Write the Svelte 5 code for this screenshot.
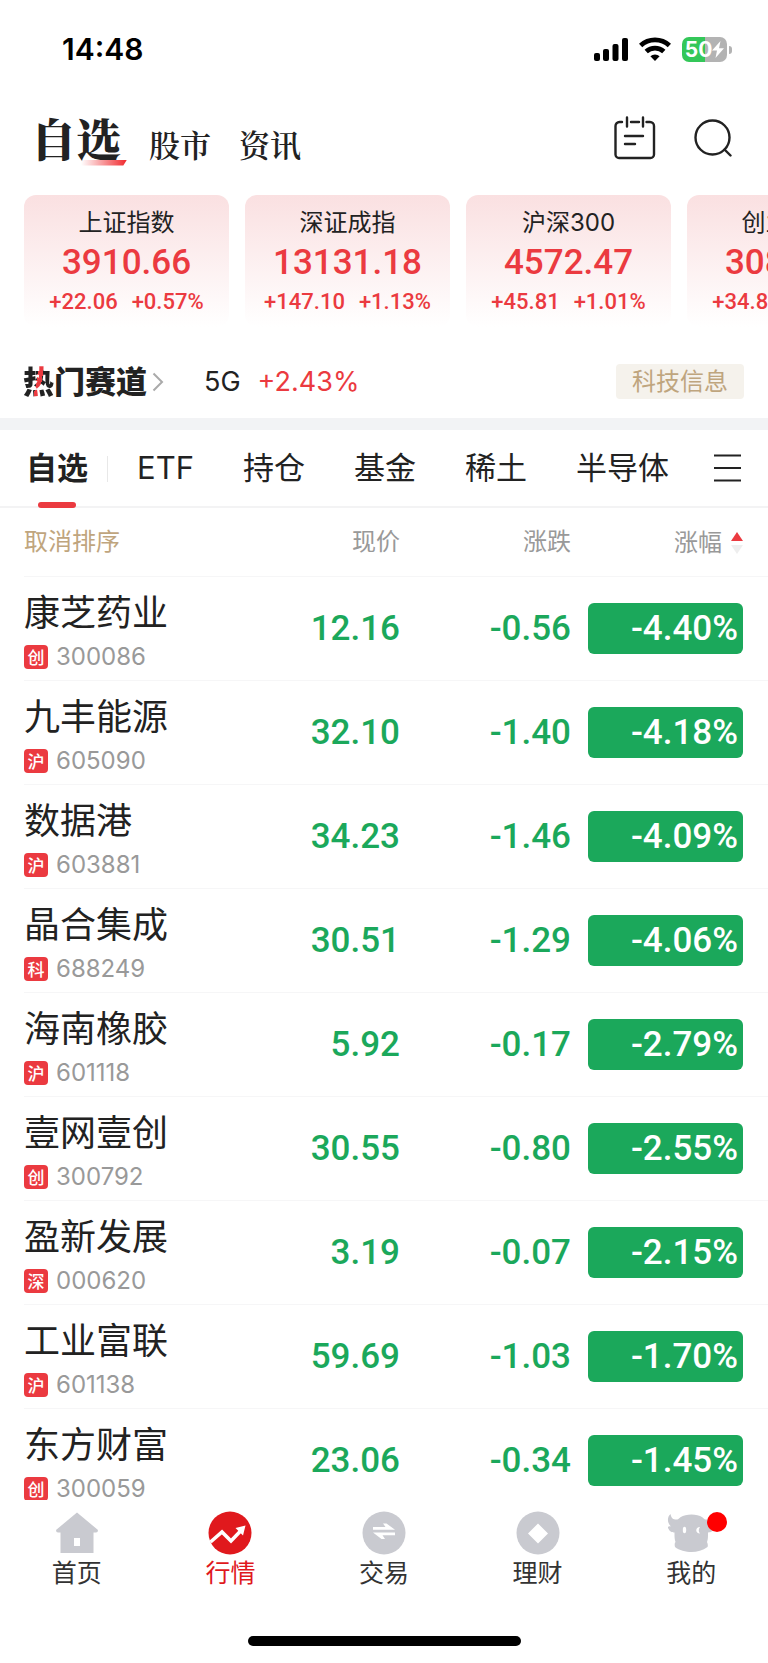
<script lang="ts">
	type Stock = { name: string; market: string; code: string; price: string; change: string; percent: string };

	const indices = [
		{ name: '上证指数', value: '3910.66', change: '+22.06', percent: '+0.57%' },
		{ name: '深证成指', value: '13131.18', change: '+147.10', percent: '+1.13%' },
		{ name: '沪深300', value: '4572.47', change: '+45.81', percent: '+1.01%' },
		{ name: '创业板指', value: '3083.72', change: '+34.83', percent: '+1.14%' }
	];

	const groups = ['自选', 'ETF', '持仓', '基金', '稀土', '半导体'];

	const stocks: Stock[] = [
		{ name: '康芝药业', market: '创', code: '300086', price: '12.16', change: '-0.56', percent: '-4.40%' },
		{ name: '九丰能源', market: '沪', code: '605090', price: '32.10', change: '-1.40', percent: '-4.18%' },
		{ name: '数据港', market: '沪', code: '603881', price: '34.23', change: '-1.46', percent: '-4.09%' },
		{ name: '晶合集成', market: '科', code: '688249', price: '30.51', change: '-1.29', percent: '-4.06%' },
		{ name: '海南橡胶', market: '沪', code: '601118', price: '5.92', change: '-0.17', percent: '-2.79%' },
		{ name: '壹网壹创', market: '创', code: '300792', price: '30.55', change: '-0.80', percent: '-2.55%' },
		{ name: '盈新发展', market: '深', code: '000620', price: '3.19', change: '-0.07', percent: '-2.15%' },
		{ name: '工业富联', market: '沪', code: '601138', price: '59.69', change: '-1.03', percent: '-1.70%' },
		{ name: '东方财富', market: '创', code: '300059', price: '23.06', change: '-0.34', percent: '-1.45%' }
	];

	let activeGroup = $state('自选');
</script>

<div class="app">
	<div class="status">
		<span class="time">14:48</span>
		<div class="status-icons">
			<svg width="34" height="23" viewBox="0 0 34 23" aria-hidden="true">
				<rect x="0" y="15" width="6" height="8" rx="2" />
				<rect x="9" y="11" width="6" height="12" rx="2" />
				<rect x="18.500" y="6" width="6" height="17" rx="2" />
				<rect x="28" y="0" width="6" height="23" rx="2" />
			</svg>
			<svg width="32" height="24" viewBox="0 0 32 24" fill="none" stroke="#000" stroke-width="4.800" aria-hidden="true">
				<path d="M1.600 8.500A21 21 0 0 1 30.400 8.500" />
				<path d="M7.200 14.600A13 13 0 0 1 24.800 14.600" />
				<path d="M16 24l-4.600-4.700a6.800 6.800 0 0 1 9.200 0z" fill="#000" stroke="none" />
			</svg>
			<div class="battery">
				<span>50</span>
				<svg width="12" height="17" viewBox="0 0 12 17" fill="#fff" aria-hidden="true">
					<path d="M8.500 0L0 9.500h5L3.500 17 12 7.200H7z" />
				</svg>
			</div>
		</div>
	</div>

	<header class="top">
		<nav class="sections">
			<a class="current" href="#watch">自选</a>
			<a href="#market">股市</a>
			<a href="#news">资讯</a>
		</nav>
		<button class="icon" aria-label="日历">
			<svg width="42" height="44" viewBox="0 0 42 44" fill="none" stroke="#222" stroke-width="2.400" stroke-linecap="round">
				<path d="M8 6H5.500a4 4 0 0 0-4 4v28.500a3.500 3.500 0 0 0 3.500 3.500h31.500a3.500 3.500 0 0 0 3.500-3.500V10a4 4 0 0 0-4-4H32.500M17 6h8" />
				<path d="M13 1.500v9M29 1.500v9" />
				<path d="M11 20h18M11 28h10" />
			</svg>
		</button>
		<button class="icon" aria-label="搜索">
			<svg width="38" height="38" viewBox="0 0 38 38" fill="none" stroke="#222" stroke-width="2.400" stroke-linecap="round">
				<circle cx="18.500" cy="18.500" r="17" />
				<path d="M30.500 30.500l6 6" />
			</svg>
		</button>
	</header>

	<section class="indices">
		{#each indices as item}
			<a class="card" href="#index">
				<span class="card-name">{item.name}</span>
				<span class="card-value">{item.value}</span>
				<span class="card-change"><span>{item.change}</span><span>{item.percent}</span></span>
			</a>
		{/each}
	</section>

	<section class="hot">
		<h2><span class="flame">热</span>门赛道</h2>
		<svg width="12" height="20" viewBox="0 0 12 20" fill="none" stroke="#aaa" stroke-width="2" aria-hidden="true">
			<path d="M1.500 1.500l8.500 8.500-8.500 8.500" />
		</svg>
		<span class="track">5G</span>
		<span class="track-change">+2.43%</span>
		<a class="tag" href="#tech">科技信息</a>
	</section>

	<nav class="groups">
		{#each groups as group}
			<button class:active={group === activeGroup} onclick={() => (activeGroup = group)}>{group}</button>
		{/each}
		<button class="menu" aria-label="全部分组">
			<svg width="27" height="28" viewBox="0 0 27 28" stroke="#222" stroke-width="2">
				<path d="M0 1.500h27M0 14h27M0 26.500h27" />
			</svg>
		</button>
	</nav>

	<main class="list">
		<table>
			<thead>
				<tr>
					<th class="name"><button class="reset">取消排序</button></th>
					<th class="price">现价</th>
					<th class="change">涨跌</th>
					<th class="percent">
						<button class="sort">
							涨幅
							<svg width="12" height="22" viewBox="0 0 12 22" aria-hidden="true">
								<path d="M6 0l6 9H0z" fill="#eb3a40" />
								<path d="M6 22l6-9H0z" fill="#eee" />
							</svg>
						</button>
					</th>
				</tr>
			</thead>
			<tbody>
				{#each stocks as stock}
					<tr>
						<td class="name">
							<div class="stock-name">{stock.name}</div>
							<div class="stock-code"><span class="market">{stock.market}</span>{stock.code}</div>
						</td>
						<td class="price">{stock.price}</td>
						<td class="change">{stock.change}</td>
						<td class="percent"><span class="pill">{stock.percent}</span></td>
					</tr>
				{/each}
			</tbody>
		</table>
	</main>

	<nav class="tabbar">
		<a href="#home">
			<svg width="44" height="44" viewBox="0 0 44 44" fill="#c9cad0" aria-hidden="true">
				<path d="M22 1.500L1 19Q1 21.500 3 21.500H5.500V42h33V21.500H41q2 0 2-2.500zM19 27h6v8h-6z" fill-rule="evenodd" />
			</svg>
			首页
		</a>
		<a class="current" href="#quotes">
			<svg width="44" height="44" viewBox="0 0 44 44" aria-hidden="true">
				<circle cx="22" cy="22" r="21.500" fill="#e0191d" />
				<path d="M2.500 31L14 21l9 9L34 18.500" fill="none" stroke="#fff" stroke-width="3.600" />
				<path d="M27.500 17L37.500 14.500 35 24.500z" fill="#fff" />
			</svg>
			行情
		</a>
		<a href="#trade">
			<svg width="44" height="44" viewBox="0 0 44 44" aria-hidden="true">
				<circle cx="22" cy="22" r="21.500" fill="#c9cad0" />
				<path d="M11 18.800V16h12.500L21 12.500h3.500L33 18.800zM33 21.500v2.800H20.500L23 28h-3.500L11 21.500z" fill="#fff" />
			</svg>
			交易
		</a>
		<a href="#wealth">
			<svg width="44" height="44" viewBox="0 0 44 44" aria-hidden="true">
				<circle cx="22" cy="22" r="21.500" fill="#c9cad0" />
				<path d="M22 12.500l10 10-10 10-10-10z" fill="#fff" />
			</svg>
			理财
		</a>
		<a href="#mine">
			<span class="avatar">
				<svg width="48" height="44" viewBox="0 0 48 44" aria-hidden="true">
					<g fill="#c9cad0">
						<path d="M3.500 3C0 6 0 12 4 15.500 1 15 1 16 1 17 3 21 5 21.500 8 21.500H40C43 21.500 45.500 21 47.500 17 47.500 15 46 15 44.500 15.500 48.500 12 48.500 6 45 3 44.500 8 41 9 38 8.500H11C7 9 4.500 8 3.500 3z" />
						<path d="M7.500 18C7.500 8 15 3.500 24.500 3.500S41 8 41 18V23C41 26 41 28 40 31 41 33 41 35 40.500 36 36 39.500 30 41 24.500 41S12 39.500 8 36C7.500 34 7.500 32 8.500 31 7.500 28 7.500 26 7.500 23z" />
					</g>
					<ellipse cx="17.500" cy="19" rx="1.700" ry="3.200" fill="#fff" />
					<path d="M33 16c-5 0-5 6.500 0 6.500q-2.500-3.200 0-6.500z" fill="#fff" />
				</svg>
				<i class="dot"></i>
			</span>
			我的
		</a>
	</nav>
	<div class="home-indicator"></div>
</div>

<style>
	:global(body) {
		background: #fff;
	}

	.app {
		display: flex;
		flex-direction: column;
		height: 100vh;
		overflow: hidden;
		color: #222;
		font-family: Inter, 'Noto Sans CJK SC', sans-serif;
	}

	a {
		color: inherit;
		text-decoration: none;
	}

	button {
		padding: 0;
		border: 0;
		background: none;
		color: inherit;
		font: inherit;
		cursor: pointer;
	}

	svg {
		display: block;
		flex: none;
	}

	.status {
		display: flex;
		align-items: center;
		justify-content: space-between;
		height: 98px;
		padding: 0 36px 0 62px;
		box-sizing: border-box;
		flex: none;
		color: #000;
	}

	.time {
		font-size: 30px;
		font-weight: 600;
	}

	.status-icons {
		display: flex;
		align-items: center;
		gap: 11px;
	}

	.battery {
		position: relative;
		display: flex;
		align-items: center;
		justify-content: center;
		width: 45px;
		height: 25px;
		margin-right: 5px;
		border-radius: 7px;
		background: linear-gradient(90deg, #34c759 50%, #b3b3b3 50%);
		color: #fff;
		font-size: 21px;
		font-weight: 700;
	}

	.battery::after {
		content: '';
		position: absolute;
		right: -5px;
		top: 9px;
		width: 3px;
		height: 8px;
		border-radius: 0 4px 4px 0;
		background: #b3b3b3;
	}

	.top {
		display: flex;
		align-items: center;
		height: 97px;
		padding: 0 36px 18px 31px;
		box-sizing: border-box;
		flex: none;
	}

	.sections {
		display: flex;
		align-items: baseline;
		gap: 28px;
		flex: 1;
		font-family: 'Noto Serif CJK SC', 'Noto Sans CJK SC', serif;
		font-size: 31px;
		font-weight: 600;
	}

	.sections .current {
		position: relative;
		font-size: 45px;
		font-weight: 900;
		line-height: 62px;
	}

	.sections .current::after {
		content: '';
		position: absolute;
		right: -6px;
		bottom: 3px;
		z-index: -1;
		width: 46px;
		height: 6px;
		background: linear-gradient(90deg, #fff, #f0282d);
		clip-path: polygon(0 0, 100% 0, 92% 100%, 0 100%);
	}

	.icon + .icon {
		margin-left: 38px;
	}

	.indices {
		display: flex;
		gap: 16px;
		padding-left: 24px;
		overflow: hidden;
		flex: none;
	}

	.card {
		display: flex;
		flex-direction: column;
		align-items: center;
		flex: none;
		width: 205px;
		padding: 10px 0 8px;
		box-sizing: border-box;
		border-radius: 12px;
		background: linear-gradient(#fae0e1, #fff);
	}

	.card-name {
		font-size: 24px;
		line-height: 36px;
	}

	.card-value {
		color: #eb3a40;
		font-family: Roboto, sans-serif;
		font-size: 35px;
		font-weight: 500;
		line-height: 44px;
	}

	.card-change {
		display: flex;
		gap: 14px;
		color: #eb3a40;
		font-family: Roboto, sans-serif;
		font-size: 22px;
		font-weight: 500;
		line-height: 34px;
	}

	.hot {
		display: flex;
		align-items: center;
		height: 91px;
		padding: 18px 24px 0 23px;
		box-sizing: border-box;
		flex: none;
		font-size: 27px;
	}

	.hot h2 {
		margin: 0 5px 0 0;
		font-size: 31px;
		font-weight: 900;
		line-height: 40px;
	}

	.flame {
		background: linear-gradient(100deg, #222 44%, #eb3a40 44%, #eb3a40 58%, #222 58%);
		background-clip: text;
		color: transparent;
	}

	.track {
		margin: 0 17px 0 40px;
	}

	.track-change {
		color: #eb3a40;
	}

	.tag {
		margin-left: auto;
		padding: 0 16px;
		border-radius: 4px;
		background: #f5f2ec;
		color: #bfa57e;
		font-size: 24px;
		line-height: 35px;
	}

	.groups {
		display: flex;
		align-items: center;
		gap: 49px;
		height: 90px;
		padding: 0 26px;
		box-sizing: border-box;
		border-top: 12px solid #f2f3f5;
		border-bottom: 2px solid #f3f3f4;
		flex: none;
		font-size: 31px;
	}

	.groups button {
		position: relative;
		white-space: nowrap;
		line-height: 76px;
	}

	.groups .active {
		font-weight: 700;
	}

	.groups .active::after {
		content: '';
		position: absolute;
		left: 50%;
		bottom: -2px;
		width: 38px;
		height: 6px;
		margin-left: -19px;
		border-radius: 3px;
		background: #eb3a40;
	}

	.groups button:first-child::before {
		content: '';
		position: absolute;
		right: -20px;
		top: 26px;
		width: 1px;
		height: 26px;
		background: #e8e8e8;
	}

	.groups .menu {
		margin-left: -4px;
	}

	.list {
		flex: 1;
		min-height: 0;
		margin-left: 24px;
		overflow: auto;
		scrollbar-width: none;
	}

	table {
		width: 100%;
		border-spacing: 0;
		table-layout: fixed;
	}

	th {
		height: 69px;
		padding: 0;
		box-sizing: border-box;
		border-bottom: 1px solid #f6f6f7;
		color: #999;
		font-size: 24px;
		font-weight: 400;
		line-height: 32px;
		text-align: right;
	}

	td {
		height: 104px;
		padding: 0;
		box-sizing: border-box;
		border-bottom: 1px solid #f6f6f7;
		color: #1ba85b;
		font-family: Roboto, sans-serif;
		font-size: 35px;
		font-weight: 500;
		text-align: right;
	}

	.name {
		text-align: left;
	}

	.price {
		width: 160px;
	}

	.change {
		width: 171px;
	}

	.percent {
		width: 197px;
		padding: 0 25px 0 17px;
		box-sizing: border-box;
	}

	.reset {
		color: #bfa57e;
	}

	.sort {
		display: inline-flex;
		align-items: center;
		gap: 9px;
		vertical-align: middle;
	}

	.stock-name {
		color: #222;
		font-family: 'Noto Sans CJK SC', sans-serif;
		font-size: 36px;
		font-weight: 400;
		line-height: 44px;
		white-space: nowrap;
	}

	.stock-code {
		display: flex;
		align-items: center;
		gap: 8px;
		margin-top: 13px;
		color: #999;
		font-family: Inter, sans-serif;
		font-size: 24px;
		font-weight: 400;
		line-height: 24px;
	}

	.market {
		width: 24px;
		border-radius: 4px;
		background: #eb3a40;
		color: #fff;
		font-family: 'Noto Sans CJK SC', sans-serif;
		font-size: 17px;
		font-weight: 500;
		text-align: center;
	}

	.pill {
		display: block;
		padding-right: 5px;
		border-radius: 6px;
		background: #1ba85b;
		color: #fff;
		line-height: 51px;
	}

	.tabbar {
		display: flex;
		flex: none;
		padding-top: 11px;
		background: #fff;
		font-size: 25px;
	}

	.tabbar a {
		display: flex;
		flex: 1;
		flex-direction: column;
		align-items: center;
		color: #333;
		line-height: 36px;
	}

	.tabbar .current {
		color: #e0191d;
	}

	.avatar {
		position: relative;
	}

	.dot {
		position: absolute;
		right: -12px;
		top: 1px;
		width: 20px;
		height: 20px;
		border-radius: 50%;
		background: #f00;
	}

	.home-indicator {
		flex: none;
		width: 273px;
		height: 10px;
		margin: 45px auto 17px;
		border-radius: 5px;
		background: #000;
	}
</style>
